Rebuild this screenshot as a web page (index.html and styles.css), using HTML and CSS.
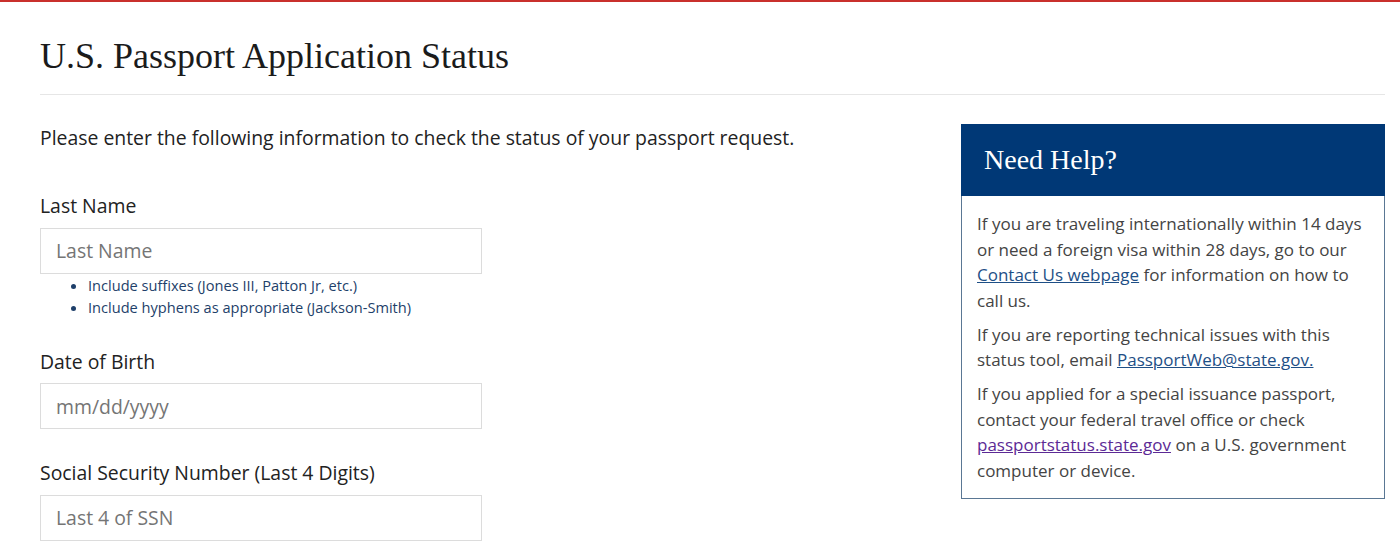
FILE: index.html
```html
<!DOCTYPE html>
<html lang="en">
<head>
<meta charset="utf-8">
<title>U.S. Passport Application Status</title>
<link rel="stylesheet" href="styles.css">
</head>
<body>
<div class="topbar"></div>
<div class="page">
  <h1 class="title">U.S. Passport Application Status</h1>
  <div class="row">
    <div class="form-col">
      <p class="intro">Please enter the following information to check the status of your passport request.</p>
      <div class="field">
        <label class="label" for="ln">Last Name</label>
        <input class="input" id="ln" type="text" placeholder="Last Name">
        <ul class="hints">
          <li>Include suffixes (Jones III, Patton Jr, etc.)</li>
          <li>Include hyphens as appropriate (Jackson-Smith)</li>
        </ul>
      </div>
      <div class="field">
        <label class="label" for="dob">Date of Birth</label>
        <input class="input" id="dob" type="text" placeholder="mm/dd/yyyy">
      </div>
      <div class="field">
        <label class="label" for="ssn">Social Security Number (Last 4 Digits)</label>
        <input class="input" id="ssn" type="text" placeholder="Last 4 of SSN">
      </div>
    </div>
    <aside class="help">
      <div class="help-head">Need Help?</div>
      <div class="help-body">
        <p>If you are traveling internationally within 14 days or need a foreign visa within 28 days, go to our <a class="link" href="#">Contact Us webpage</a> for information on how to call us.</p>
        <p>If you are reporting technical issues with this status tool, email <a class="link" href="#">PassportWeb@state.gov.</a></p>
        <p>If you applied for a special issuance passport, contact your federal travel office or check <a class="link visited" href="#">passportstatus.state.gov</a> on a U.S. government computer or device.</p>
      </div>
    </aside>
  </div>
</div>
</body>
</html>
```

FILE: styles.css
```css
html, body {
  margin: 0;
  padding: 0;
  background: #ffffff;
}
body {
  font-family: "Open Sans", "Noto Sans", sans-serif;
  color: #222222;
  overflow: hidden;
}
.topbar {
  height: 2px;
  background: #c9302c;
}
.page {
  padding: 0 15px 0 40px;
}
.title {
  margin: 0;
  padding: 32px 0 16px;
  font-family: "Liberation Serif", "Times New Roman", serif;
  font-weight: 400;
  font-size: 36px;
  line-height: 44px;
  color: #1b1b1b;
  border-bottom: 1px solid #e6e6e6;
}
.row {
  display: flex;
  justify-content: space-between;
  align-items: flex-start;
  margin-top: 29px;
}
.form-col {
  width: 800px;
}
.intro {
  margin: 0 0 40px;
  font-size: 19.4px;
  line-height: 28px;
  white-space: nowrap;
  color: #222222;
}
.field {
  margin-bottom: 30px;
}
.label {
  display: block;
  font-size: 19.4px;
  line-height: 27px;
  margin-bottom: 8.5px;
  color: #222222;
}
.input {
  display: block;
  box-sizing: border-box;
  width: 442px;
  height: 46px;
  margin: 0;
  padding: 0 15px;
  border: 1px solid #dcdcdc;
  border-radius: 0;
  font-family: "Open Sans", "Noto Sans", sans-serif;
  font-size: 19.4px;
  color: #222222;
  background: #ffffff;
}
.input::placeholder {
  color: #757575;
  opacity: 1;
}
.hints {
  margin: 0;
  padding-left: 48px;
  font-size: 14.6px;
  line-height: 22px;
  color: #1e3f6a;
}
.help {
  width: 424px;
  box-sizing: border-box;
}
.help-head {
  background: #003876;
  color: #ffffff;
  height: 72px;
  display: flex;
  align-items: center;
  padding-left: 23px;
  font-family: "Liberation Serif", "Times New Roman", serif;
  font-size: 28px;
}
.help-body {
  border: 1px solid #5a7794;
  border-top: none;
  padding: 15px 15px 6px;
  font-size: 17px;
  line-height: 25.5px;
  color: #444444;
}
.help-body p {
  margin: 0 0 8.5px;
}
.link {
  color: #1e4f86;
  text-decoration: underline;
}
.link.visited {
  color: #5c2a95;
}
```
